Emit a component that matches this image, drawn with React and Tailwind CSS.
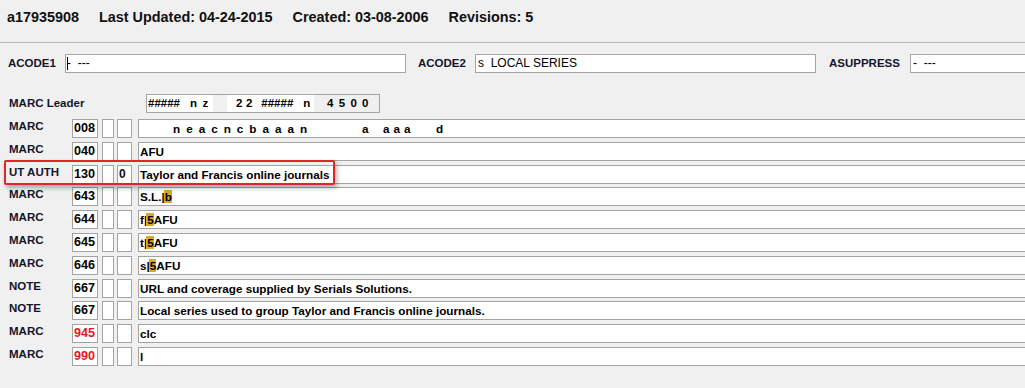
import React from "react";

// fixed-position chars of the 008 field
const Fixed008 = () => (
  <>
    <span className="ml-[33px] tracking-[6px]">neacncbaaan</span>
    <span className="ml-[49px]">a</span>
    <span className="ml-[14.5px] tracking-[4px]">aaa</span>
    <span className="ml-[21.5px]">d</span>
  </>
);

const Sub = ({ pre, code, rest }) => (
  <>
    {pre}|<span className="bg-[#d8a92c] -ml-[1px] pl-[1px]">{code}</span>
    {rest}
  </>
);

const rows = [
  { label: "MARC", tag: "008", body: <Fixed008 /> },
  { label: "MARC", tag: "040", body: "AFU" },
  { label: "UT AUTH", tag: "130", ind2: "0", body: "Taylor and Francis online journals" },
  { label: "MARC", tag: "643", body: <Sub pre="S.L." code="b" rest="" /> },
  { label: "MARC", tag: "644", body: <Sub pre="f" code="5" rest="AFU" /> },
  { label: "MARC", tag: "645", body: <Sub pre="t" code="5" rest="AFU" /> },
  { label: "MARC", tag: "646", body: <Sub pre="s" code="5" rest="AFU" /> },
  { label: "NOTE", tag: "667", body: "URL and coverage supplied by Serials Solutions." },
  { label: "NOTE", tag: "667", body: "Local series used to group Taylor and Francis online journals." },
  { label: "MARC", tag: "945", red: true, body: "clc" },
  { label: "MARC", tag: "990", red: true, body: "l" },
];

const box = "h-[19px] border border-[#a3a3a3] bg-white";

const FieldRow = ({ row }) => (
  <div className="flex h-[19px]">
    <div className="w-[63px] leading-[14px] text-[11.5px] font-bold text-[#15152a]">{row.label}</div>
    <div
      className={`${box} w-[26px] pl-[1px] text-[12.6px] leading-[17px] font-bold ${
        row.red ? "text-[#e8161e]" : "text-black"
      }`}
    >
      {row.tag}
    </div>
    <div className={`${box} ml-[4px] w-[12px]`}></div>
    <div className={`${box} ml-[3px] w-[15px] pl-[1px] text-[12px] leading-[17px] font-bold`}>
      {row.ind2}
    </div>
    <div className={`${box} ml-[6px] flex-1 -mr-[20px] pl-[1px] text-[11.7px] leading-[17px] font-bold text-black whitespace-pre`}>
      {row.body}
    </div>
  </div>
);

export default function App() {
  return (
    <div className="relative w-full h-[388px] overflow-hidden bg-[#f0f0f0] text-[#111] font-['Liberation_Sans',Arial,sans-serif]">
      {/* record header */}
      <div className="h-[43px] border-b border-[#b4b4b4] flex gap-5 pl-[7px] pt-[9px] text-[14.4px] leading-[16px] font-bold">
        <span>a17935908</span>
        <span>Last Updated: 04-24-2015</span>
        <span>Created: 03-08-2006</span>
        <span>Revisions: 5</span>
      </div>

      {/* fixed-length fields */}
      <div className="mt-[11px] flex items-center h-[19px] pl-[8px]">
        <span className="w-[57px] text-[11.5px] font-bold text-[#15152a]">ACODE1</span>
        <div className="w-[341px] h-[19px] border border-[#a5a5a5] bg-white text-[12px] leading-[17px] pl-[1px] whitespace-pre text-black">
          <span className="inline-block w-px h-[13px] bg-black align-middle -mr-px"></span>-  ---
        </div>
        <span className="ml-[12px] w-[57px] text-[11.5px] font-bold text-[#15152a]">ACODE2</span>
        <div className="w-[341px] h-[19px] border border-[#a5a5a5] bg-white text-[12px] leading-[17px] pl-[2px] whitespace-pre text-black">
          s  LOCAL SERIES
        </div>
        <span className="ml-[13px] w-[81px] text-[11.5px] font-bold text-[#15152a]">ASUPPRESS</span>
        <div className="flex-1 -mr-[10px] h-[19px] border border-[#a5a5a5] bg-white text-[12px] leading-[17px] pl-[2px] whitespace-pre text-black">
          -  ---
        </div>
      </div>

      {/* leader */}
      <div className="mt-[21px] flex items-center h-[19px] pl-[9px]">
        <span className="w-[137px] text-[11.5px] font-bold text-[#15152a]">MARC Leader</span>
        <div className="w-[234px] h-[19px] border border-[#a5a5a5] flex text-[11.5px] leading-[17px] font-bold text-black whitespace-pre">
          <div className="w-[66px] bg-white pl-[1px]">
            #####<span className="ml-[10px]">n</span>
            <span className="ml-[5.5px]">z</span>
          </div>
          <div className="w-[14px] bg-[#f0f0f0]"></div>
          <div className="w-[87px] bg-white pl-[9px]">
            2<span className="ml-[3.5px]">2</span>
            <span className="ml-[9px]">#####</span>
            <span className="ml-[10px]">n</span>
          </div>
          <div className="flex-1 bg-[#f0f0f0] pl-[13px] tracking-[5.3px]">4500</div>
        </div>
      </div>

      {/* variable fields */}
      <div className="mt-[6px] pl-[9px] flex flex-col gap-[3.8px]">
        {rows.map((r, i) => (
          <FieldRow key={i} row={r} />
        ))}
      </div>

      {/* annotation around the 130 field */}
      <div className="absolute left-[4px] top-[160px] w-[331px] h-[25px] border-2 border-[#e2252b] rounded-[2px] shadow-[2px_3px_5px_rgba(0,0,0,0.3)] pointer-events-none"></div>
    </div>
  );
}
